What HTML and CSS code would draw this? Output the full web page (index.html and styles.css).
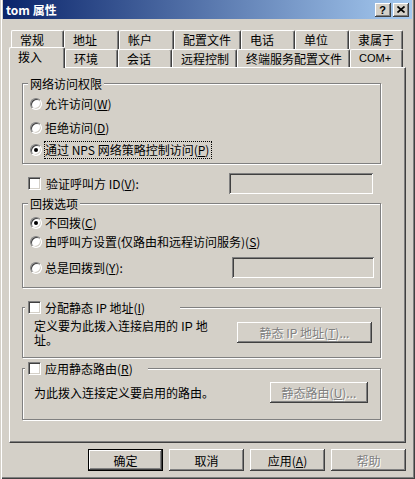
FILE: index.html
```html
<!DOCTYPE html>
<html lang="zh-CN">
<head>
  <meta charset="UTF-8">
  <title>tom 属性</title>
  <link rel="stylesheet" href="styles.css">
</head>
<body>

  <div class="window">

    <!-- Заголовок окна -->
    <div class="titlebar">
      <span class="title">tom 属性</span>
      <div class="caption-btns">
        <span class="cap-btn help">?</span>
        <span class="cap-btn">
          <svg width="8" height="7" viewBox="0 0 8 7">
            <path d="M0.5 0.5 L7.5 6.5 M7.5 0.5 L0.5 6.5" stroke="#000" stroke-width="1.7" fill="none"/>
          </svg>
        </span>
      </div>
    </div>

    <!-- Вкладки (два ряда) -->
    <div class="tabs">
      <div class="tab-row back">
        <div class="tab">常规</div>
        <div class="tab">地址</div>
        <div class="tab">帐户</div>
        <div class="tab">配置文件</div>
        <div class="tab">电话</div>
        <div class="tab">单位</div>
        <div class="tab">隶属于</div>
      </div>
      <div class="tab-row front">
        <div class="tab active">拨入</div>
        <div class="tab">环境</div>
        <div class="tab">会话</div>
        <div class="tab">远程控制</div>
        <div class="tab">终端服务配置文件</div>
        <div class="tab latin">COM+</div>
      </div>
    </div>

    <!-- Содержимое вкладки -->
    <div class="panel">

      <fieldset class="group g-access">
        <legend>网络访问权限</legend>
        <div class="opt"><span class="radio"></span><span>允许访问(<u>W</u>)</span></div>
        <div class="opt second"><span class="radio"></span><span>拒绝访问(<u>D</u>)</span></div>
        <div class="opt third"><span class="radio on"></span><span class="focus">通过 NPS 网络策略控制访问(<u>P</u>)</span></div>
      </fieldset>

      <div class="opt verify">
        <span class="check"></span>
        <span>验证呼叫方 ID(<u>V</u>):</span>
        <span class="field verify-field"></span>
      </div>

      <fieldset class="group g-callback">
        <legend>回拨选项</legend>
        <div class="opt"><span class="radio on"></span><span>不回拨(<u>C</u>)</span></div>
        <div class="opt second"><span class="radio"></span><span>由呼叫方设置(仅路由和远程访问服务)(<u>S</u>)</span></div>
        <div class="opt always">
          <span class="radio"></span>
          <span>总是回拨到(<u>Y</u>):</span>
          <span class="field always-field"></span>
        </div>
      </fieldset>

      <fieldset class="group boxed g-ip">
        <legend><span class="check"></span><span>分配静态 IP 地址(<u>I</u>)</span></legend>
        <div class="boxed-row ip-row">
          <p class="note two-lines">定义要为此拨入连接启用的 IP 地<br>址。</p>
          <span class="btn disabled ip-btn">静态 IP 地址(<u>T</u>)...</span>
        </div>
      </fieldset>

      <fieldset class="group boxed g-route">
        <legend><span class="check"></span><span>应用静态路由(<u>R</u>)</span></legend>
        <div class="boxed-row route-row">
          <p class="note">为此拨入连接定义要启用的路由。</p>
          <span class="btn disabled route-btn">静态路由(<u>U</u>)...</span>
        </div>
      </fieldset>

    </div>

    <!-- Кнопки диалога -->
    <div class="buttons">
      <span class="btn default">确定</span>
      <span class="btn">取消</span>
      <span class="btn">应用(<u>A</u>)</span>
      <span class="btn disabled">帮助</span>
    </div>

  </div>

</body>
</html>
```

FILE: styles.css
```css
/* Сброс */
* {
  margin: 0;
  padding: 0;
  box-sizing: border-box;
}
body {
  font-family: "Noto Sans CJK SC", "Liberation Sans", sans-serif;
  font-size: 12px;
  color: #000;
  background: #d4d0c8;
}
u {
  text-decoration: underline;
}

/* Окно */
.window {
  width: 415px;
  height: 479px;
  padding: 0 3px;
  background: #d4d0c8;
  box-shadow: inset 1px 0 #d4d0c8, inset 2px 0 #fff,
              inset -1px -1px #404040, inset -2px -2px #808080;
}

/* Заголовок */
.titlebar {
  height: 19px;
  display: flex;
  align-items: center;
  justify-content: space-between;
  padding: 0 3px 0 3px;
  background: linear-gradient(to right, #0a246a, #a6caf0);
}
.title {
  color: #fff;
  font-weight: bold;
  line-height: 14px;
}
.caption-btns {
  display: flex;
  gap: 2px;
}
.cap-btn {
  width: 16px;
  height: 14px;
  display: flex;
  align-items: center;
  justify-content: center;
  background: #d4d0c8;
  box-shadow: inset -1px -1px #404040, inset 1px 1px #fff, inset -2px -2px #808080;
}
.cap-btn.help {
  font-family: "Liberation Sans", sans-serif;
  font-weight: bold;
  font-size: 11px;
  line-height: 12px;
  padding-right: 1px;
}

/* Вкладки */
.tabs {
  margin-top: 11px;
  padding-left: 6px;
}
.tab-row {
  display: grid;
}
.back {
  grid-template-columns: 53px 55px 55px 67px 54px 54px 54px;
  height: 19px;
  margin-left: 2px;
}
.front {
  grid-template-columns: 56px 53px 54px 65px 113px 53px;
  height: 18px;
}
.tab {
  height: 19px;
  padding-left: 8px;
  line-height: 17px;
  white-space: nowrap;
  background: #d4d0c8;
  border-left: 1px solid #fff;
  border-top: 1px solid #fff;
  border-right: 1px solid #404040;
  border-radius: 2px 2px 0 0;
  box-shadow: inset -1px 0 #808080;
}
.front .tab {
  height: 18px;
}
.front .tab.active {
  height: 21px;
  margin-top: -2px;
  margin-bottom: -1px;
  position: relative;
  z-index: 1;
}
.tab.latin {
  font-family: "Liberation Sans", sans-serif;
  font-size: 11px;
}

/* Панель вкладки */
.panel {
  margin-left: 6px;
  width: 397px;
  height: 376px;
  padding: 0 0 0 12px;
  border: 1px solid;
  border-color: #fff #404040 #404040 #fff;
  box-shadow: inset -1px -1px #808080;
}

/* Рамки групп */
.group {
  width: 359px;
  border: 1px solid #808080;
  box-shadow: inset 1px 1px #fff, 1px 1px #fff;
  padding: 0 0 0 5px;
}
.group legend {
  padding: 0 2px;
  line-height: 15px;
  background: #d4d0c8;
}
.g-access {
  margin-top: 8px;
  padding-top: 6px;
  padding-bottom: 6px;
}
.g-callback {
  margin-top: 2px;
  padding-top: 5px;
  padding-bottom: 9px;
}

/* Строки с переключателями */
.opt {
  display: flex;
  align-items: center;
  height: 14px;
  line-height: 14px;
  margin-left: 2px;
  white-space: nowrap;
}
.g-access .second { margin-top: 10px; }
.g-access .third { margin-top: 8px; }
.g-callback .second { margin-top: 5px; }
.opt.always {
  width: 344px;
  height: 21px;
  margin-top: 8px;
}
.opt.verify {
  width: 345px;
  height: 21px;
  margin: 9px 0 0 6px;
}

.radio {
  position: relative;
  width: 12px;
  height: 12px;
  margin-right: 3px;
  flex: none;
  border-radius: 50%;
  background: #fff;
  border: 1px solid;
  border-color: #808080 #fff #fff #808080;
  box-shadow: inset 1px 1px #404040, inset -1px -1px #d4d0c8;
}
.radio.on::after {
  content: "";
  position: absolute;
  left: 3px;
  top: 3px;
  width: 4px;
  height: 4px;
  border-radius: 50%;
  background: #000;
}
.check {
  width: 13px;
  height: 13px;
  margin-right: 5px;
  flex: none;
  background: #fff;
  border: 1px solid;
  border-color: #808080 #fff #fff #808080;
  box-shadow: inset 1px 1px #404040, inset -1px -1px #d4d0c8;
}
.focus {
  border: 1px dotted #000;
  padding: 1px 2px 1px 0;
  margin-left: -1px;
  line-height: 14px;
}

/* Поля ввода (недоступные) */
.field {
  margin-left: auto;
  height: 21px;
  background: #d4d0c8;
  box-shadow: inset 1px 1px #808080, inset -1px -1px #fff, inset 2px 2px #404040;
}
.verify-field { width: 144px; }
.always-field { width: 142px; }

/* Группы с флажком в заголовке */
.group.boxed {
  padding-left: 2px;
}
.group.boxed legend {
  display: flex;
  align-items: center;
  padding: 0 0 0 3px;
  white-space: nowrap;
}
.group.boxed legend .check {
  margin-right: 4px;
}
.g-ip {
  margin-top: 12px;
  padding-top: 5px;
  padding-bottom: 9px;
}
.g-ip legend { width: 155px; }
.g-route {
  margin-top: 3px;
  padding-top: 6px;
  padding-bottom: 16px;
}
.g-route legend { width: 123px; }

.boxed-row {
  display: flex;
  align-items: center;
  margin-left: 9px;
}
.ip-row {
  width: 338px;
  align-items: flex-start;
}
.ip-row .ip-btn {
  margin-top: 2px;
}
.route-row { width: 334px; }
.note {
  line-height: 14px;
  white-space: nowrap;
}
/* две строки почти вплотную, как в оригинале */
.note.two-lines {
  font-family: "Liberation Sans", "Noto Sans CJK SC", sans-serif;
  line-height: 14px;
}

/* Кнопки */
.btn {
  display: flex;
  align-items: center;
  justify-content: center;
  height: 22px;
  width: 75px;
  background: #d4d0c8;
  white-space: nowrap;
  box-shadow: inset -1px -1px #404040, inset 1px 1px #fff, inset -2px -2px #808080;
}
.btn.default {
  border: 1px solid #000;
}
.btn.disabled {
  color: #808080;
  text-shadow: 1px 1px #fff;
}
.ip-btn {
  margin-left: auto;
  width: 135px;
  height: 21px;
}
.route-btn {
  margin-left: auto;
  width: 98px;
  height: 21px;
}
.buttons {
  display: flex;
  justify-content: flex-end;
  gap: 6px;
  width: 397px;
  margin: 6px 0 0 6px;
}
```
